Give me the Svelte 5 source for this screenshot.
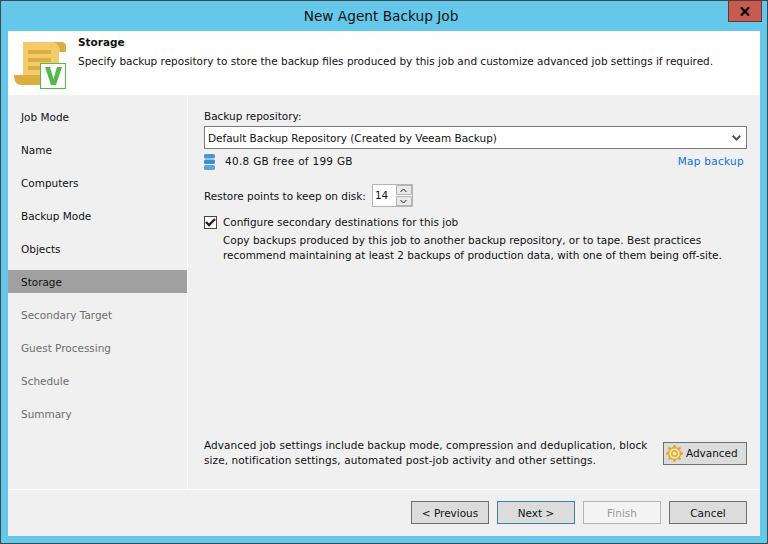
<script lang="ts">
  const steps = [
    { label: 'Job Mode', state: 'done' },
    { label: 'Name', state: 'done' },
    { label: 'Computers', state: 'done' },
    { label: 'Backup Mode', state: 'done' },
    { label: 'Objects', state: 'done' },
    { label: 'Storage', state: 'active' },
    { label: 'Secondary Target', state: 'todo' },
    { label: 'Guest Processing', state: 'todo' },
    { label: 'Schedule', state: 'todo' },
    { label: 'Summary', state: 'todo' }
  ];

  let restorePoints = $state(14);
  let secondary = $state(true);
</script>

<div class="window">
  <div class="titlebar">
    <span class="title">New Agent Backup Job</span>
    <button class="close" aria-label="Close">
      <svg width="10" height="9" viewBox="0 0 10 9">
        <path d="M1 .5 L9 8.5 M9 .5 L1 8.5" stroke="#000" stroke-width="2.2" fill="none" />
      </svg>
    </button>
  </div>

  <div class="body">
    <header class="header">
      <svg class="logo" width="54" height="50" viewBox="0 0 54 50">
        <path d="M9 0 H47 Q52 0 52 5 V10 H45 V38 H9 Z" fill="#f3ca6c" />
        <path d="M40 0 H47 Q52 0 52 5 V10 H46 Q46 3 40 0 Z" fill="#dcae3f" />
        <path d="M0 33 H30 V43 H7 Q1 43 0 35 Z" fill="#dcae3f" />
        <rect x="14" y="8" width="23" height="4" fill="#dcae3f" />
        <rect x="14" y="16" width="23" height="4" fill="#dcae3f" />
        <rect x="14" y="24" width="12" height="4" fill="#dcae3f" />
        <rect x="26.5" y="21.5" width="25" height="25" fill="#fff" stroke="#54b948" />
        <path d="M31 25 H36 L39.5 37 L43 25 H48 L42 43 H37 Z" fill="#54b948" />
      </svg>
      <div class="header-text">
        <h1>Storage</h1>
        <p>Specify backup repository to store the backup files produced by this job and customize advanced job settings if required.</p>
      </div>
    </header>

    <div class="middle">
      <nav class="steps">
        {#each steps as step}
          <div class="step {step.state}">{step.label}</div>
        {/each}
      </nav>

      <main class="content">
        <label class="repo-label" for="repo">Backup repository:</label>
        <div class="select" id="repo">
          <span>Default Backup Repository (Created by Veeam Backup)</span>
          <svg width="9" height="6" viewBox="0 0 9 6">
            <path d="M.7 .7 L4.5 4.5 L8.3 .7" stroke="#555" stroke-width="2" fill="none" />
          </svg>
        </div>

        <div class="free-row">
          <svg class="db" width="11" height="16" viewBox="0 0 11 16">
            <rect y="0" width="11" height="4.5" rx="1.5" fill="#4a97cf" />
            <rect y="5.5" width="11" height="4.5" rx="1.5" fill="#3f8fc9" />
            <rect y="11" width="11" height="5" rx="1.5" fill="#5aa5d8" />
          </svg>
          <span class="free">40.8 GB free of 199 GB</span>
          <span class="link">Map backup</span>
        </div>

        <div class="points-row">
          <span>Restore points to keep on disk:</span>
          <div class="spinner">
            <span class="spin-value">{restorePoints}</span>
            <div class="spin-buttons">
              <button aria-label="Up" onclick={() => restorePoints++}>
                <svg width="7" height="5" viewBox="0 0 7 5"><path d="M.5 4 L3.5 1 L6.5 4" stroke="#222" fill="none" /></svg>
              </button>
              <button aria-label="Down" onclick={() => restorePoints--}>
                <svg width="7" height="5" viewBox="0 0 7 5"><path d="M.5 1 L3.5 4 L6.5 1" stroke="#222" fill="none" /></svg>
              </button>
            </div>
          </div>
        </div>

        <div class="check-row">
          <button class="check" aria-label="Toggle" onclick={() => (secondary = !secondary)}>
            {#if secondary}
              <svg width="11" height="9" viewBox="0 0 11 9"><path d="M1 4 L4 7 L10 1" stroke="#222" stroke-width="2.4" fill="none" /></svg>
            {/if}
          </button>
          <span>Configure secondary destinations for this job</span>
        </div>
        <p class="check-note">Copy backups produced by this job to another backup repository, or to tape. Best practices<br />recommend maintaining at least 2 backups of production data, with one of them being off-site.</p>

        <div class="advanced-row">
          <p>Advanced job settings include backup mode, compression and deduplication, block<br />size, notification settings, automated post-job activity and other settings.</p>
          <button class="btn advanced">
            <svg width="17" height="17" viewBox="0 0 17 17">
              <g stroke="#e5a82e" stroke-width="2.4">
                <path d="M8.5 0 V17 M0 8.5 H17 M2.5 2.5 L14.5 14.5 M14.5 2.5 L2.5 14.5" />
              </g>
              <circle cx="8.5" cy="8.5" r="6" fill="#f6e3ae" stroke="#e5a82e" stroke-width="1.5" />
              <circle cx="8.5" cy="8.5" r="2.6" fill="#f9f0d4" stroke="#e5a82e" stroke-width="1.5" />
            </svg>
            Advanced
          </button>
        </div>
      </main>
    </div>

    <footer class="footer">
      <button class="btn">&lt; Previous</button>
      <button class="btn default">Next &gt;</button>
      <button class="btn" disabled>Finish</button>
      <button class="btn">Cancel</button>
    </footer>
  </div>
</div>

<style>
  :global(body) {
    margin: 0;
  }

  .window {
    box-sizing: border-box;
    width: 768px;
    height: 544px;
    display: flex;
    flex-direction: column;
    background: #65c8ea;
    border: 1px solid #3c4a50;
    padding: 0 7px 7px;
    font-family: 'DejaVu Sans', sans-serif;
    font-size: 10.47px;
    color: #111;
  }

  .titlebar {
    position: relative;
    height: 30px;
    flex: none;
    display: flex;
    align-items: center;
    justify-content: center;
    padding-right: 6px;
  }

  .title {
    font-size: 13.7px;
  }

  .close {
    position: absolute;
    top: -1px;
    right: -2px;
    width: 34px;
    height: 22px;
    padding: 0;
    display: flex;
    align-items: center;
    justify-content: center;
    background: #c75b52;
    border: 1px solid #5a3a38;
  }

  .body {
    flex: 1;
    min-height: 0;
    display: flex;
    flex-direction: column;
    background: #f0f0f0;
  }

  .header {
    height: 64px;
    flex: none;
    display: flex;
    background: #fff;
  }

  .logo {
    margin: 11px 0 0 6px;
    flex: none;
  }

  .header-text {
    margin-left: 10px;
    padding-top: 5px;
  }

  h1 {
    margin: 0;
    font-size: 10.47px;
    font-weight: 700;
    line-height: 13px;
  }

  .header-text p {
    margin: 5px 0 0;
    line-height: 14px;
  }

  .middle {
    flex: 1;
    min-height: 0;
    display: flex;
    border-bottom: 1px solid #fff;
  }

  .steps {
    width: 179px;
    flex: none;
    box-sizing: border-box;
    padding-top: 10px;
    display: flex;
    flex-direction: column;
    gap: 10px;
  }

  .step {
    height: 23px;
    line-height: 25px;
    padding-left: 13px;
  }

  .step.active {
    background: #a0a0a0;
  }

  .step.todo {
    color: #6d6d6d;
  }

  .content {
    flex: 1;
    min-width: 0;
    display: flex;
    flex-direction: column;
    padding: 14px 13px 0 16px;
    border-left: 1px solid #fff;
  }

  .repo-label {
    line-height: 14px;
  }

  .select {
    box-sizing: border-box;
    height: 23px;
    margin-top: 3px;
    display: flex;
    align-items: center;
    justify-content: space-between;
    padding: 0 5px 0 3px;
    background: #fff;
    border: 1px solid #7a7a7a;
  }

  .free-row {
    display: flex;
    align-items: center;
    margin-top: 3px;
    height: 18px;
  }

  .db {
    margin-top: 2px;
  }

  .free {
    margin-left: 10px;
    letter-spacing: 0.3px;
  }

  .link {
    margin-left: auto;
    margin-right: 3px;
    color: #0a6fe8;
    letter-spacing: 0.3px;
  }

  .points-row {
    display: flex;
    align-items: center;
    gap: 6px;
    margin-top: 14px;
    height: 23px;
  }

  .spinner {
    box-sizing: border-box;
    width: 41px;
    height: 23px;
    display: flex;
    justify-content: space-between;
    background: #fff;
    border: 1px solid #b5b5b5;
  }

  .spin-value {
    padding-left: 2px;
    line-height: 20px;
  }

  .spin-buttons {
    width: 16px;
    display: flex;
    flex-direction: column;
    gap: 1px;
  }

  .spin-buttons button {
    flex: 1;
    padding: 0;
    display: flex;
    align-items: center;
    justify-content: center;
    background: #e8e8e8;
    border: 1px solid #b5b5b5;
  }

  .check-row {
    display: flex;
    align-items: center;
    gap: 6px;
    margin-top: 7px;
    height: 16px;
  }

  .check {
    box-sizing: border-box;
    width: 13px;
    height: 13px;
    padding: 0;
    display: flex;
    align-items: center;
    justify-content: center;
    background: #fff;
    border: 1px solid #444;
  }

  .check-note {
    margin: 3px 0 0 19px;
    line-height: 15px;
  }

  .advanced-row {
    margin-top: auto;
    margin-bottom: 21px;
    display: flex;
    align-items: center;
    justify-content: space-between;
  }

  .advanced-row p {
    margin: 0;
    line-height: 15px;
    letter-spacing: 0.09px;
  }

  .btn {
    box-sizing: border-box;
    width: 78px;
    height: 23px;
    padding: 0;
    display: inline-flex;
    align-items: center;
    justify-content: center;
    gap: 4px;
    background: #dcdcdc;
    border: 1px solid #707070;
    font: inherit;
    color: #111;
  }

  .btn.advanced {
    width: 84px;
    justify-content: flex-start;
    gap: 3px;
    padding-left: 2px;
  }

  .btn.default {
    border-color: #3c7fb1;
  }

  .btn:disabled {
    background: #f4f4f4;
    border-color: #b5b5b5;
    color: #9a9a9a;
  }

  .footer {
    height: 46px;
    flex: none;
    box-sizing: border-box;
    padding: 11px 13px 0 0;
    display: flex;
    justify-content: flex-end;
    gap: 8px;
  }
</style>
